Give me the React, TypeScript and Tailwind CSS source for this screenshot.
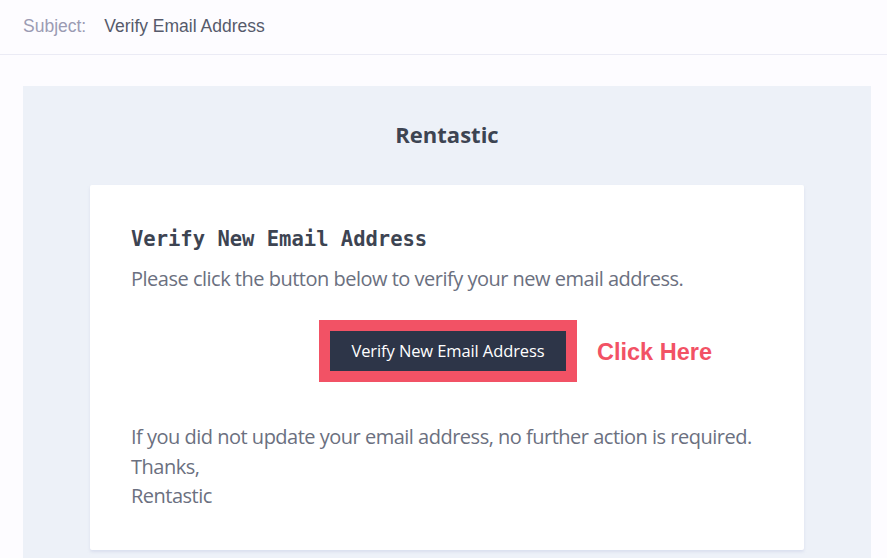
const body = "font-['Segoe_UI','Open_Sans',sans-serif]";

export default function App() {
  return (
    <div className="w-[887px] h-[558px] overflow-hidden bg-[#fdfcff]">
      <div className="h-[55px] border-b border-[#ebebf5] flex items-center pl-[23px] pb-[2px] font-['Liberation_Sans',Arial,sans-serif] text-[17.5px]">
        <span className="text-[#9b9bb3]">Subject:</span>
        <span className="ml-[18px] text-[#565a6b]">Verify Email Address</span>
      </div>
      <div className="pt-[31px] pl-[23px] pr-[16px]">
        <div className={`bg-[#edf1f8] h-[480px] ${body}`}>
          <div className="h-[99px] flex items-center justify-center">
            <span className="text-[22px] font-bold text-[#3d4452] font-['Open_Sans',sans-serif] -mt-[2px]">Rentastic</span>
          </div>
          <div className="mx-[67px] bg-white rounded-[2px] shadow-[0_2px_3px_rgba(210,215,235,0.7)] h-[365px] pt-[42px] px-[41px]">
            <h1 className="font-['DejaVu_Sans_Mono',monospace] font-bold text-[20.5px] text-[#3d4452] leading-[24px]">
              Verify New Email Address
            </h1>
            <p className="mt-[13px] text-[20px] leading-[30px] text-[#6b7080] tracking-[-0.5px]">
              Please click the button below to verify your new email address.
            </p>
            <div className="mt-[26px] flex items-center">
              <div className="ml-[188px] bg-[#f25265] p-[11px]">
                <div className="bg-[#2d3548] w-[236px] h-[40px] flex items-center justify-center text-white text-[16.5px] tracking-[-0.1px]">
                  Verify New Email Address
                </div>
              </div>
              <span className="ml-[20px] mt-[3px] font-['Liberation_Sans',Arial,sans-serif] font-bold text-[23.5px] text-[#f25265]">
                Click Here
              </span>
            </div>
            <div className="mt-[40px] text-[20px] leading-[29.5px] text-[#6b7080] tracking-[-0.5px]">
              <p>If you did not update your email address, no further action is required.</p>
              <p>Thanks,</p>
              <p>Rentastic</p>
            </div>
          </div>
        </div>
      </div>
    </div>
  );
}
